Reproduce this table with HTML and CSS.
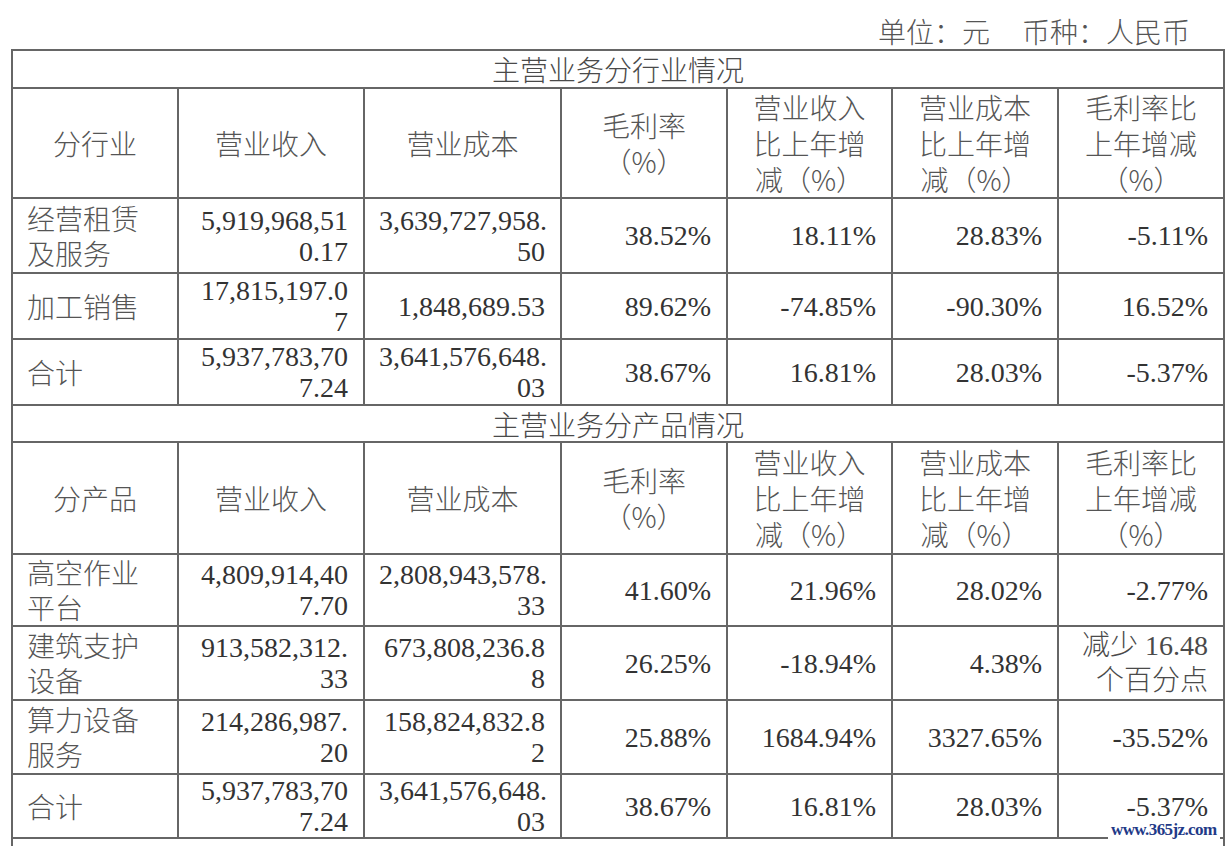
FILE: index.html
```html
<!DOCTYPE html>
<html lang="zh-CN">
<head>
<meta charset="utf-8">
<title>主营业务情况</title>
<link rel="stylesheet" href="styles.css">
</head>
<body>
<div class="unit">单位：元<span class="gap"></span>币种：人民币</div>
<table class="report">
  <colgroup>
    <col class="w1"><col class="w2"><col class="w3"><col class="w4"><col class="w5"><col class="w6"><col class="w7">
  </colgroup>
  <tr class="sec1"><td class="sec" colspan="7">主营业务分行业情况</td></tr>
  <tr class="hdr1">
    <th>分行业</th><th>营业收入</th><th>营业成本</th><th>毛利率<br>（%）</th>
    <th>营业收入<br>比上年增<br>减（%）</th><th>营业成本<br>比上年增<br>减（%）</th><th>毛利率比<br>上年增减<br>（%）</th>
  </tr>
  <tr class="ra">
    <td class="name">经营租赁<br>及服务</td><td>5,919,968,51<br>0.17</td><td>3,639,727,958.<br>50</td>
    <td>38.52%</td><td>18.11%</td><td>28.83%</td><td>-5.11%</td>
  </tr>
  <tr class="rb">
    <td class="name">加工销售</td><td>17,815,197.0<br>7</td><td>1,848,689.53</td>
    <td>89.62%</td><td>-74.85%</td><td>-90.30%</td><td>16.52%</td>
  </tr>
  <tr class="rb">
    <td class="name">合计</td><td>5,937,783,70<br>7.24</td><td>3,641,576,648.<br>03</td>
    <td>38.67%</td><td>16.81%</td><td>28.03%</td><td>-5.37%</td>
  </tr>
  <tr class="sec2"><td class="sec" colspan="7">主营业务分产品情况</td></tr>
  <tr class="hdr2">
    <th>分产品</th><th>营业收入</th><th>营业成本</th><th>毛利率<br>（%）</th>
    <th>营业收入<br>比上年增<br>减（%）</th><th>营业成本<br>比上年增<br>减（%）</th><th>毛利率比<br>上年增减<br>（%）</th>
  </tr>
  <tr class="rc">
    <td class="name">高空作业<br>平台</td><td>4,809,914,40<br>7.70</td><td>2,808,943,578.<br>33</td>
    <td>41.60%</td><td>21.96%</td><td>28.02%</td><td>-2.77%</td>
  </tr>
  <tr class="rd">
    <td class="name">建筑支护<br>设备</td><td>913,582,312.<br>33</td><td>673,808,236.8<br>8</td>
    <td>26.25%</td><td>-18.94%</td><td>4.38%</td><td class="mixed">减少 16.48<br>个百分点</td>
  </tr>
  <tr class="rd">
    <td class="name">算力设备<br>服务</td><td>214,286,987.<br>20</td><td>158,824,832.8<br>2</td>
    <td>25.88%</td><td>1684.94%</td><td>3327.65%</td><td>-35.52%</td>
  </tr>
  <tr class="re">
    <td class="name">合计</td><td>5,937,783,70<br>7.24</td><td>3,641,576,648.<br>03</td>
    <td>38.67%</td><td>16.81%</td><td>28.03%</td><td>-5.37%</td>
  </tr>
  <tr class="rf">
    <td colspan="7"></td>
  </tr>
</table>
<div class="watermark">www.365jz.com</div>
</body>
</html>
```

FILE: styles.css
```css
html, body {
  margin: 0;
  padding: 0;
  background: #ffffff;
  overflow: hidden;
}

body {
  position: relative;
  width: 1232px;
  height: 846px;
  font-family: "Liberation Serif", "Noto Sans CJK SC", serif;
  color: #333333;
}

.unit {
  margin-top: 14px;
  padding-right: 42px;
  text-align: right;
  font-family: "Noto Sans CJK SC", sans-serif;
  font-weight: 300;
  font-size: 28px;
  line-height: 35px;
  color: #555555;
}

.unit .gap {
  display: inline-block;
  width: 32px;
}

.report {
  margin-left: 11px;
  width: 1212px;
  table-layout: fixed;
  border-collapse: collapse;
  border: 2px solid #666666;
}

.w1 { width: 166px; }
.w2 { width: 186px; }
.w3 { width: 197px; }
.w4 { width: 166px; }
.w5 { width: 165px; }
.w6 { width: 166px; }
.w7 { width: 166px; }

.report td,
.report th {
  border: 2px solid #666666;
  padding: 0 15px 0 14px;
  font-size: 28px;
  line-height: 31px;
  font-weight: normal;
  vertical-align: middle;
  text-align: right;
  color: #333333;
  white-space: nowrap;
}

.report th {
  padding: 0;
  text-align: center;
  font-family: "Noto Sans CJK SC", sans-serif;
  font-weight: 300;
  line-height: 36px;
  color: #555555;
}

.report td.sec {
  padding: 0;
  text-align: center;
  font-family: "Noto Sans CJK SC", sans-serif;
  font-weight: 300;
  line-height: 34px;
  color: #4a4a4a;
}

.report td.name {
  text-align: left;
  font-family: "Noto Sans CJK SC", sans-serif;
  font-weight: 300;
  line-height: 35px;
  color: #555555;
}

.report td.mixed {
  font-weight: 300;
  line-height: 35px;
  color: #4a4a4a;
}

.sec1 { height: 38px; }
.hdr1 { height: 109px; }
.ra { height: 75px; }
.rb { height: 66px; }
.sec2 { height: 37px; }
.hdr2 { height: 112px; }
.rc { height: 71px; }
.rd { height: 74px; }
.re { height: 64px; }
.rf { height: 40px; }

.watermark {
  position: absolute;
  left: 1108px;
  top: 821px;
  padding: 0 3px;
  background: #ffffff;
  font-family: "Liberation Serif", serif;
  font-weight: bold;
  font-size: 17px;
  line-height: 18px;
  letter-spacing: -0.6px;
  color: #1f3a88;
}
```
